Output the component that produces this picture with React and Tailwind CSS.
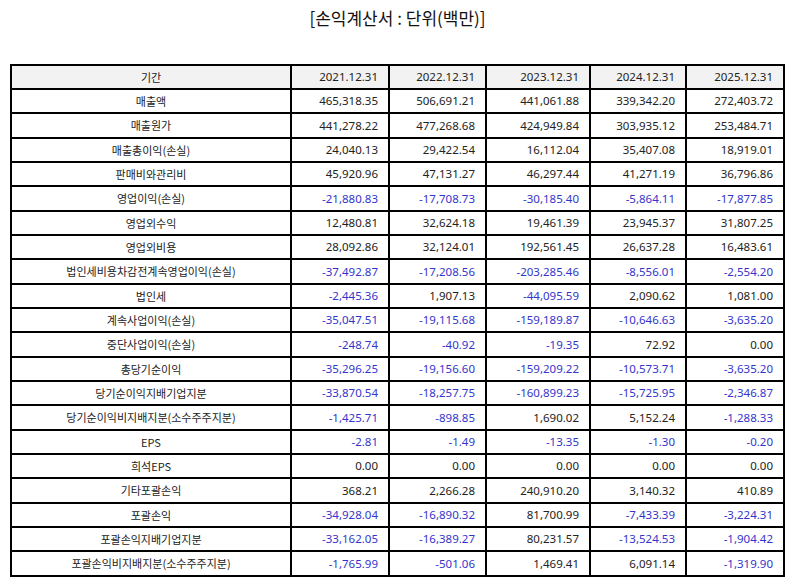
import React from 'react';

const years = ['2021.12.31', '2022.12.31', '2023.12.31', '2024.12.31', '2025.12.31'];

const rows = [
    ['매출액', '465,318.35', '506,691.21', '441,061.88', '339,342.20', '272,403.72'],
    ['매출원가', '441,278.22', '477,268.68', '424,949.84', '303,935.12', '253,484.71'],
    ['매출총이익(손실)', '24,040.13', '29,422.54', '16,112.04', '35,407.08', '18,919.01'],
    ['판매비와관리비', '45,920.96', '47,131.27', '46,297.44', '41,271.19', '36,796.86'],
    ['영업이익(손실)', '-21,880.83', '-17,708.73', '-30,185.40', '-5,864.11', '-17,877.85'],
    ['영업외수익', '12,480.81', '32,624.18', '19,461.39', '23,945.37', '31,807.25'],
    ['영업외비용', '28,092.86', '32,124.01', '192,561.45', '26,637.28', '16,483.61'],
    ['법인세비용차감전계속영업이익(손실)', '-37,492.87', '-17,208.56', '-203,285.46', '-8,556.01', '-2,554.20'],
    ['법인세', '-2,445.36', '1,907.13', '-44,095.59', '2,090.62', '1,081.00'],
    ['계속사업이익(손실)', '-35,047.51', '-19,115.68', '-159,189.87', '-10,646.63', '-3,635.20'],
    ['중단사업이익(손실)', '-248.74', '-40.92', '-19.35', '72.92', '0.00'],
    ['총당기순이익', '-35,296.25', '-19,156.60', '-159,209.22', '-10,573.71', '-3,635.20'],
    ['당기순이익지배기업지분', '-33,870.54', '-18,257.75', '-160,899.23', '-15,725.95', '-2,346.87'],
    ['당기순이익비지배지분(소수주주지분)', '-1,425.71', '-898.85', '1,690.02', '5,152.24', '-1,288.33'],
    ['EPS', '-2.81', '-1.49', '-13.35', '-1.30', '-0.20'],
    ['희석EPS', '0.00', '0.00', '0.00', '0.00', '0.00'],
    ['기타포괄손익', '368.21', '2,266.28', '240,910.20', '3,140.32', '410.89'],
    ['포괄손익', '-34,928.04', '-16,890.32', '81,700.99', '-7,433.39', '-3,224.31'],
    ['포괄손익지배기업지분', '-33,162.05', '-16,389.27', '80,231.57', '-13,524.53', '-1,904.42'],
    ['포괄손익비지배지분(소수주주지분)', '-1,765.99', '-501.06', '1,469.41', '6,091.14', '-1,319.90'],
];

const rowH = i => (i % 3 === 1 ? 'h-[25px]' : 'h-[24px]');
const cell = 'border-r-2 border-b-2 border-black p-0 leading-none';
const num = "text-right pr-[10px] text-[11.5px] font-['Noto_Sans','Noto_Sans_CJK_KR',sans-serif]";

export default function App() {
    return (
        <div className="w-[795px] h-[586px] bg-white text-[#222] font-['Noto_Sans_CJK_KR','Noto_Sans',sans-serif]">
            <h1 className="pt-[6px] h-[64px] text-center text-[17px] leading-[24px] text-[#111]">[손익계산서 : 단위(백만)]</h1>
            <table className="ml-[10px] w-[775px] table-fixed border-separate border-spacing-0 text-[11px]">
                <colgroup>
                    <col className="w-[282px]" />
                    <col className="w-[98px]" />
                    <col className="w-[97px]" />
                    <col className="w-[104px]" />
                    <col className="w-[96px]" />
                    <col className="w-[98px]" />
                </colgroup>
                <thead>
                    <tr className="bg-[#f2f2f2]">
                        <th className={`${cell} h-[26px] border-t-2 border-l-2 font-normal text-center`}>기간</th>
                        {years.map(y => <th key={y} className={`${cell} ${num} h-[26px] border-t-2 font-normal`}>{y}</th>)}
                    </tr>
                </thead>
                <tbody>
                    {rows.map(([label, ...vals], r) => (
                        <tr key={label}>
                            <td className={`${cell} ${rowH(r)} border-l-2 text-center`}>{label}</td>
                            {vals.map((v, i) => (
                                <td key={i} className={`${cell} ${num} ${rowH(r)} ${v.startsWith('-') ? 'text-[#3434cc]' : ''}`}>{v}</td>
                            ))}
                        </tr>
                    ))}
                </tbody>
            </table>
        </div>
    );
}
